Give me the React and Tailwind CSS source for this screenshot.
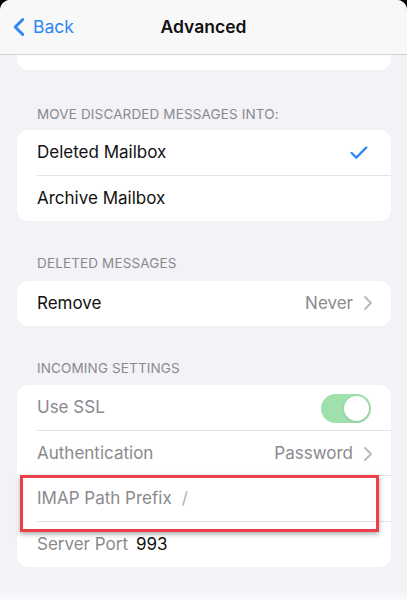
import { ChevronLeft, ChevronRight, Check } from "lucide-react";

const font = { fontFamily: "Inter, 'Noto Sans', sans-serif" };

function SectionHeader({ children, className }) {
  return (
    <p className={"pl-[37px] text-[13.5px] uppercase tracking-[0.01em] text-[#8a8a8e] " + (className || "")}>
      {children}
    </p>
  );
}

function Row({ children, divider = true }) {
  return (
    <div className="relative flex h-[45.5px] items-center pl-[20px] pr-[20px]">
      {children}
      {divider && <div className="absolute bottom-0 left-[20px] right-0 h-px bg-[#e2e2e6]" />}
    </div>
  );
}

export default function App() {
  return (
    <div className="h-[600px] w-[407px] overflow-hidden bg-black" style={font}>
      <div className="flex h-full flex-col overflow-hidden rounded-t-[10px] bg-[#f2f2f7]">
        {/* nav bar */}
        <div className="relative flex h-[55px] shrink-0 items-center border-b border-[#d4d4d6] bg-[#f8f8f8]">
          <div className="flex items-center pl-[4px] text-[#2f86f5]">
            <ChevronLeft size={30} strokeWidth={2.4} />
            <span className="-ml-[1px] text-[17.5px]">Back</span>
          </div>
          <h1 className="absolute left-0 right-0 text-center text-[17.5px] font-semibold text-[#111]">Advanced</h1>
        </div>

        <div className="-mt-px ml-[17px] mr-[16px] h-[16px] rounded-b-[11px] bg-white" />

        <SectionHeader className="mt-[34px]">Move discarded messages into:</SectionHeader>
        <div className="ml-[17px] mr-[16px] mt-[6px] overflow-hidden rounded-[11px] bg-white text-[17px] text-[#111]">
          <Row>
            <span className="flex-1">Deleted Mailbox</span>
            <Check size={22} strokeWidth={2.6} className="mr-[1px] text-[#2f86f5]" />
          </Row>
          <Row divider={false}>
            <span>Archive Mailbox</span>
          </Row>
        </div>

        <SectionHeader className="mt-[32px]">Deleted messages</SectionHeader>
        <div className="ml-[17px] mr-[16px] mt-[7px] overflow-hidden rounded-[11px] bg-white text-[17px] text-[#111]">
          <Row divider={false}>
            <span className="flex-1">Remove</span>
            <span className="text-[#8a8a8e]">Never</span>
            <ChevronRight size={24} strokeWidth={1.8} className="ml-[3px] -mr-[9px] text-[#b8b8bc]" />
          </Row>
        </div>

        <SectionHeader className="mt-[32px]">Incoming settings</SectionHeader>
        <div className="relative ml-[17px] mr-[16px] mt-[7px] rounded-[11px] bg-white text-[17px] text-[#8a8a8e]">
          <Row>
            <span className="flex-1">Use SSL</span>
            <div className="flex h-[29px] w-[50px] items-center justify-end rounded-full bg-[#9fe0ad] p-[2px]">
              <div className="h-[25px] w-[25px] rounded-full bg-white shadow-[0_1px_3px_rgba(0,0,0,0.15)]" />
            </div>
          </Row>
          <Row>
            <span className="flex-1">Authentication</span>
            <span>Password</span>
            <ChevronRight size={24} strokeWidth={1.8} className="ml-[3px] -mr-[9px] text-[#b8b8bc]" />
          </Row>
          <Row>
            <span>IMAP Path Prefix</span>
            <span className="ml-[10px] text-[#b0b0b4]">/</span>
          </Row>
          <Row divider={false}>
            <span>Server Port</span>
            <span className="ml-[8px] text-[#111]">993</span>
          </Row>
          {/* highlight box */}
          <div className="pointer-events-none absolute left-[3px] top-[90px] h-[57px] w-[359px] border-[3px] border-[#ec3f48] shadow-[0_2px_5px_rgba(0,0,0,0.35)]" />
        </div>

        <div className="mt-auto h-[7px] bg-[#f8f8fa]" />
      </div>
    </div>
  );
}
